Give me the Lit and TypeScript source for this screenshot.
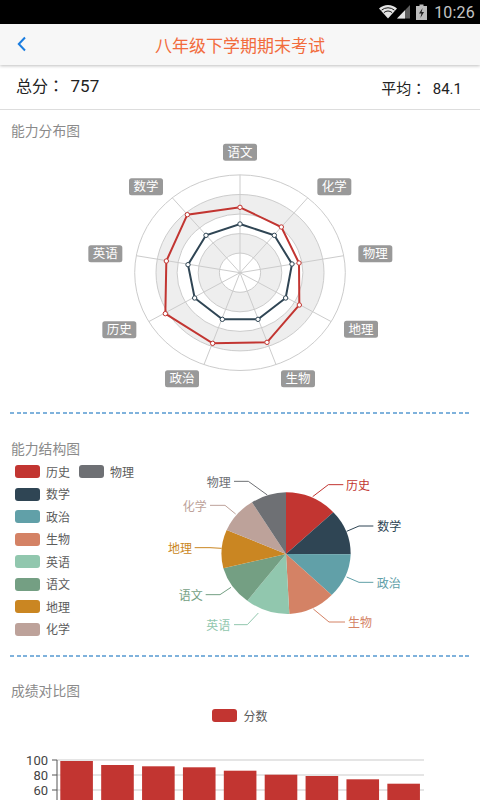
import { LitElement, html, css, svg } from "lit";
import { customElement } from "lit/decorators.js";

const RED = "#c23531";
const DARK = "#2f4554";
type P = [number, number];

const rz = ([x, y]: P): P => [80 + x / 3, 140 + y / 3];
const pz = ([x, y]: P): P => [160 + x / 3, 460 + y / 3];
const pts = (a: P[]) => a.map((p) => p.join(",")).join(" ");

const RC: P = [240, 272.7];
const RINGS: P[] = [[105.3, 97.8], [84, 78.2], [62.9, 58.7], [41.8, 39.1], [20.6, 19.6]];
const SPOKES: P[] = Array.from({ length: 9 }, (_, i) => {
  const a = (i * 40 * Math.PI) / 180;
  return [RC[0] + 105.3 * Math.sin(a), RC[1] - 97.8 * Math.cos(a)] as P;
});
const RED_PTS = ([[480, 202], [604, 261], [657, 369], [658, 495], [561, 607], [398, 610], [256, 521], [259, 363], [322, 224]] as P[]).map(rz);
const DARK_PTS = ([[480, 252], [583, 286], [636, 372], [617, 474], [534, 538], [427, 538], [344, 474], [324, 374], [378, 286]] as P[]).map(rz);
const RADAR_LABELS: [string, P][] = [
  ["语文", [480, 37]], ["化学", [763, 140]], ["物理", [886, 341]], ["地理", [843, 568]], ["生物", [654, 716]],
  ["政治", [306, 716]], ["历史", [118, 569]], ["英语", [76, 341]], ["数学", [198, 140]],
];

const PIE_C: P = [378, 285];
const SLICES: { name: string; color: string; from: P; to: P; line: P[]; tx: number }[] = [
  { name: "历史", color: RED, from: [378, 100], to: [520, 160], line: [[458, 113], [505, 77], [550, 77]], tx: 558 },
  { name: "数学", color: DARK, from: [520, 160], to: [572, 286], line: [[560, 217], [597, 201], [640, 201]], tx: 652 },
  { name: "政治", color: "#61a0a8", from: [572, 286], to: [515, 408], line: [[560, 354], [597, 370], [640, 370]], tx: 650 },
  { name: "生物", color: "#d48265", from: [515, 408], to: [388, 465], line: [[460, 450], [507, 489], [555, 489]], tx: 564 },
  { name: "英语", color: "#91c7ae", from: [388, 465], to: [262, 425], line: [[295, 462], [262, 497], [222, 497]], tx: 139 },
  { name: "语文", color: "#749f83", from: [262, 425], to: [190, 328], line: [[213, 385], [180, 407], [137, 407]], tx: 56 },
  { name: "地理", color: "#ca8622", from: [190, 328], to: [200, 213], line: [[185, 268], [150, 266], [104, 266]], tx: 24 },
  { name: "化学", color: "#bda29a", from: [200, 213], to: [276, 130], line: [[227, 165], [195, 139], [150, 139]], tx: 68 },
  { name: "物理", color: "#6e7074", from: [276, 130], to: [378, 100], line: [[322, 108], [265, 67], [222, 67]], tx: 140 },
];

const LEGEND: [string, string][][] = [
  [["历史", RED], ["物理", "#6e7074"]],
  [["数学", DARK]],
  [["政治", "#61a0a8"]],
  [["生物", "#d48265"]],
  [["英语", "#91c7ae"]],
  [["语文", "#749f83"]],
  [["地理", "#ca8622"]],
  [["化学", "#bda29a"]],
];

const BAR_TOPS = [761, 765, 766.3, 767.3, 770.7, 774.7, 776, 779.3, 783.7];

@customElement("app-root")
export class AppRoot extends LitElement {
  static styles = css`
    :host {
      display: block;
      width: 480px;
      height: 800px;
      overflow: hidden;
      background: #fff;
      font-family: Roboto, "Noto Sans CJK SC", sans-serif;
    }
    .status {
      height: 24px;
      background: #000;
      display: flex;
      align-items: center;
      justify-content: flex-end;
      padding-right: 5px;
      color: #c4c4c4;
      font-size: 16px;
      letter-spacing: 0.2px;
    }
    .status svg {
      display: block;
    }
    .net {
      margin-right: 6px;
    }
    .batt {
      margin-right: 7px;
    }
    .bar {
      height: 41px;
      background: #f7f7f7;
      box-shadow: 0 1px 3px rgba(0, 0, 0, 0.25);
      display: flex;
      align-items: center;
      justify-content: center;
      position: relative;
      color: #f26c3d;
      font-size: 17px;
    }
    .back {
      position: absolute;
      left: 17px;
      top: 12px;
    }
    .summary {
      height: 44px;
      border-bottom: 1px solid #ddd;
      display: flex;
      justify-content: space-between;
      padding: 0 18px 0 16px;
      color: #222;
    }
    .colon {
      font-family: "Noto Sans CJK TC", sans-serif;
    }
    .total {
      font-size: 16px;
      align-self: center;
      margin-top: -5px;
    }
    .total b {
      font-weight: 400;
      font-size: 17px;
      margin-left: 6.5px;
    }
    .avg {
      font-size: 15px;
      align-self: center;
      margin-top: 0;
    }
    .avg b {
      font-weight: 400;
      margin-left: 6.5px;
    }
    .title {
      height: 20px;
      line-height: 20px;
      padding-left: 11px;
      font-size: 13.8px;
      color: #8a8a8a;
    }
    .t1 { margin-top: 11px; }
    .t2 { margin-top: 25px; }
    .t3 { margin-top: 24px; }
    .dash {
      height: 2px;
      margin: 0 10px;
      background: repeating-linear-gradient(90deg, #7fb2dc 0 4px, transparent 4px 6.6px);
    }
    svg.chart {
      display: block;
    }
    svg text {
      font-family: Roboto, "Noto Sans CJK SC", sans-serif;
    }
    .row {
      display: flex;
      height: 196px;
    }
    .legend {
      width: 160px;
      box-sizing: border-box;
      padding: 6px 0 0 15px;
      display: flex;
      flex-direction: column;
      gap: 9.5px;
    }
    .lrow {
      display: flex;
      gap: 9px;
      height: 13px;
    }
    .item {
      display: flex;
      align-items: center;
      gap: 6px;
      font-size: 12px;
      color: #5c5c5c;
      line-height: 13px;
    }
    .lbl {
      padding-top: 3px;
    }
    .sw {
      display: block;
      width: 25px;
      height: 13px;
      border-radius: 3px;
    }
    .center {
      justify-content: center;
      margin-top: 8px;
    }
  `;

  private radar() {
    return svg`
      ${RINGS.map((r, i) => svg`<ellipse cx=${RC[0]} cy=${RC[1]} rx=${r[0]} ry=${r[1]} fill=${i % 2 === 1 ? "#eeeeee" : "#fff"} stroke="#ccc" stroke-width="1"></ellipse>`)}
      ${SPOKES.map((p) => svg`<line x1=${RC[0]} y1=${RC[1]} x2=${p[0]} y2=${p[1]} stroke="#ccc" stroke-width="1"></line>`)}
      <polygon points=${pts(RED_PTS)} fill="none" stroke=${RED} stroke-width="2"></polygon>
      <polygon points=${pts(DARK_PTS)} fill="none" stroke=${DARK} stroke-width="2"></polygon>
      ${RED_PTS.map((p) => svg`<circle cx=${p[0]} cy=${p[1]} r="2.2" fill="#fff" stroke=${RED} stroke-width="1"></circle>`)}
      ${DARK_PTS.map((p) => svg`<circle cx=${p[0]} cy=${p[1]} r="2.2" fill="#fff" stroke=${DARK} stroke-width="1"></circle>`)}
      ${RADAR_LABELS.map(([t, c]) => {
        const [x, y] = rz(c);
        return svg`<rect x=${x - 17} y=${y - 8.5} width="34" height="17" rx="2.5" fill="#999"></rect>
          <text x=${x} y=${y + 4.4} text-anchor="middle" font-size="12.5" fill="#fff">${t}</text>`;
      })}
    `;
  }

  private pie() {
    const c = pz(PIE_C);
    return svg`
      ${SLICES.map((s) => {
        const a = pz(s.from);
        const b = pz(s.to);
        return svg`<path d="M${c[0]} ${c[1]}L${a[0]} ${a[1]}A64.7 61 0 0 1 ${b[0]} ${b[1]}Z" fill=${s.color}></path>`;
      })}
      ${SLICES.map((s) => {
        const line = s.line.map(pz);
        const last = line[2];
        return svg`<polyline points=${pts(line)} fill="none" stroke=${s.color} stroke-width="1"></polyline>
          <text x=${160 + s.tx / 3} y=${last[1] + 5.4} font-size="12" fill=${s.color}>${s.name}</text>`;
      })}
    `;
  }

  private bars() {
    return svg`
      ${[760, 775, 790].map((y) => svg`<line x1="57" y1=${y} x2="424" y2=${y} stroke="#ddd" stroke-width="1.5"></line>
        <line x1="52" y1=${y} x2="57" y2=${y} stroke="#555" stroke-width="1"></line>`)}
      <line x1="57" y1="760" x2="57" y2="800" stroke="#555" stroke-width="1"></line>
      ${BAR_TOPS.map((t, i) => svg`<rect x=${60.3 + i * 40.88} y=${t} width="32.6" height=${810 - t} fill=${RED}></rect>`)}
      ${[["100", 760], ["80", 775], ["60", 790]].map(([t, y]) => svg`<text x="48" y=${(y as number) + 4.5} text-anchor="end" font-size="13" fill="#444">${t}</text>`)}
    `;
  }

  render() {
    return html`
      <div class="status">
        <svg class="net" width="31" height="16" viewBox="0 0 31 16">
          <path d="M0 4.6C5 -0.2 13 -0.2 18 4.6L9 14.5Z" fill="#e4e4e4"></path>
          <path d="M2.6 6.1a10 10 0 0 1 12.8 0" fill="none" stroke="#000" stroke-width="0.9"></path>
          <path d="M4.9 8.6a6.6 6.6 0 0 1 8.2 0" fill="none" stroke="#000" stroke-width="0.9"></path>
          <path d="M18 14.5L31 1V14.5Z" fill="#5e5e5e"></path>
          <path d="M18 14.5L26 6.2V14.5Z" fill="#e4e4e4"></path>
        </svg>
        <svg class="batt" width="11" height="16" viewBox="0 0 11 16">
          <path d="M3.5 0.5h4v1.5H11V16H0V2h3.5Z" fill="#bdbdbd"></path>
          <path d="M6.6 4L3 9.6h2.4L4.4 14 8 8H5.6Z" fill="#222"></path>
        </svg>
        <span>10:26</span>
      </div>
      <div class="bar">
        <svg class="back" width="10" height="16" viewBox="0 0 10 16">
          <path d="M8 1.5L1.8 8L8 14.5" fill="none" stroke="#1a7de0" stroke-width="2"></path>
        </svg>
        八年级下学期期末考试
      </div>
      <div class="summary">
        <span class="total">总分<span class="colon">：</span><b>757</b></span>
        <span class="avg">平均<span class="colon">：</span><b>84.1</b></span>
      </div>
      <div class="title t1">能力分布图</div>
      <svg class="chart" width="480" height="271" viewBox="0 141 480 271">${this.radar()}</svg>
      <div class="dash"></div>
      <div class="title t2">能力结构图</div>
      <div class="row">
        <div class="legend">
          ${LEGEND.map((r) => html`<div class="lrow">
            ${r.map(([n, c]) => html`<span class="item"><span class="sw" style="background:${c}"></span><span class="lbl">${n}</span></span>`)}
          </div>`)}
        </div>
        <svg class="chart" width="320" height="196" viewBox="160 460 320 196">${this.pie()}</svg>
      </div>
      <div class="dash"></div>
      <div class="title t3">成绩对比图</div>
      <div class="lrow center">
        <span class="item"><span class="sw" style="background:${RED}"></span><span class="lbl">分数</span></span>
      </div>
      <svg class="chart" width="480" height="78" viewBox="0 722 480 78">${this.bars()}</svg>
    `;
  }
}
